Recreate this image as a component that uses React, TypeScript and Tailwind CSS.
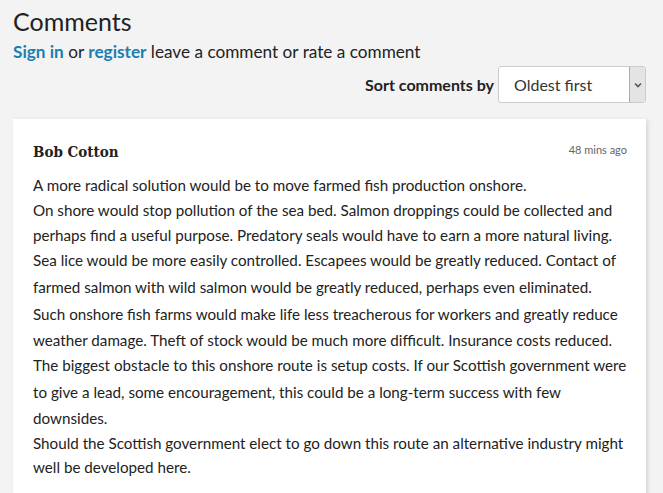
import React from "react";

const lines: [string, number][] = [
  ["A more radical solution would be to move farmed fish production onshore.", 25],
  ["On shore would stop pollution of the sea bed. Salmon droppings could be collected and", 25],
  ["perhaps find a useful purpose. Predatory seals would have to earn a more natural living.", 24],
  ["Sea lice would be more easily controlled. Escapees would be greatly reduced. Contact of", 27],
  ["farmed salmon with wild salmon would be greatly reduced, perhaps even eliminated.", 26],
  ["Such onshore fish farms would make life less treacherous for workers and greatly reduce", 28],
  ["weather damage. Theft of stock would be much more difficult. Insurance costs reduced.", 25],
  ["The biggest obstacle to this onshore route is setup costs. If our Scottish government were", 25],
  ["to give a lead, some encouragement, this could be a long-term success with few", 28],
  ["downsides.", 25],
  ["Should the Scottish government elect to go down this route an alternative industry might", 24],
  ["well be developed here.", 25],
];

export default function App() {
  return (
    <div
      className="w-[663px] h-[493px] overflow-hidden bg-[#f3f3f3] text-[#222]"
      style={{ fontFamily: "Lato, 'Noto Sans', sans-serif" }}
    >
      <div className="pl-[13px] pr-[17px]">
        <h1 className="pt-[5px] text-[25px] leading-[32px] text-[#222]">Comments</h1>
        <p className="text-[17.2px] leading-[24px] mt-[3px]">
          <a className="text-[#1a7fb0] font-bold">Sign in</a> or{" "}
          <a className="text-[#1a7fb0] font-bold">register</a> leave a comment or rate a comment
        </p>
        <div className="flex items-center justify-end gap-[4px] mt-[2px] pr-0">
          <span className="text-[16px] font-bold">Sort comments by</span>
          <div className="flex h-[37px] w-[148px] rounded-[3px] border border-[#ccc] bg-white overflow-hidden">
            <div className="flex-1 flex items-center pl-[15px] text-[16px] text-[#333]">Oldest first</div>
            <div className="w-[16px] border-l border-[#aaa] bg-[#e4e4e4] flex items-center justify-center">
              <svg width="8" height="6" viewBox="0 0 8 6">
                <path d="M1 1.5 L4 4.5 L7 1.5" stroke="#555" strokeWidth="1.6" fill="none" />
              </svg>
            </div>
          </div>
        </div>
        <div className="mt-[16px] bg-white shadow-[2px_1px_4px_rgba(0,0,0,0.12)] pl-[20px] pr-[19px] pt-[22px] pb-[20px]">
          <div className="flex items-start justify-between">
            <span
              className="text-[15px] font-bold text-[#222] leading-[22px]"
              style={{ fontFamily: "'DejaVu Serif Condensed', 'DejaVu Serif', serif", fontStretch: "condensed" }}
            >
              Bob Cotton
            </span>
            <span className="text-[11px] text-[#666] mt-[1px]">48 mins ago</span>
          </div>
          <div className="mt-[10px] text-[15.2px]">
            {lines.map(([t, h], i) => (
              <div key={i} className="whitespace-nowrap flex items-center" style={{ height: h }}>
                {t}
              </div>
            ))}
          </div>
        </div>
      </div>
    </div>
  );
}
